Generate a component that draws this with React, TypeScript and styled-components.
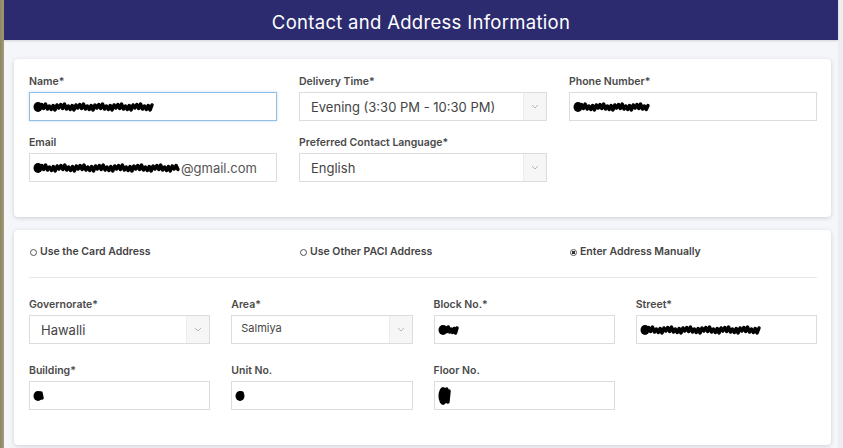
import React from "react";
import styled, { createGlobalStyle } from "styled-components";

const GlobalStyle = createGlobalStyle`
  html, body {
    margin: 0;
    padding: 0;
  }
  body {
    width: 843px;
    height: 448px;
    overflow: hidden;
    background: linear-gradient(90deg, #8c8466 0, #a59c7a 4px, #eceef1 4px);
    font-family: "Inter", "Noto Sans", sans-serif;
  }
`;

type Field = {
  label: string;
  kind: "input" | "select";
  value?: string;
  scribble?: number;
  suffix?: string;
  focused?: boolean;
  small?: boolean;
};

// redacted values in the screenshot: a rough black scrawl
const Scribble = ({ width, tall }: { width: number; tall?: boolean }) => {
  const h = tall ? 20 : 12;
  const steps = Math.max(4, Math.round(width / 2));
  let d = `M3 ${h / 2}`;
  for (let i = 1; i <= steps; i++) {
    const x = 3 + ((width - 6) * i) / steps;
    const jitter = ((i * 37) % 5) / 2;
    const y = i % 2 ? 3 + jitter : h - 3 - jitter;
    d += ` L${x.toFixed(1)} ${y}`;
  }
  return (
    <ScribbleSvg width={width} height={h} viewBox={`0 0 ${width} ${h}`}>
      <path d={d} stroke="#000" strokeWidth={3.5} fill="none" strokeLinejoin="round" strokeLinecap="round" />
      <ellipse cx={5} cy={h / 2} rx={4.5} ry={h / 2 - 1} fill="#000" />
    </ScribbleSvg>
  );
};

const Chevron = () => (
  <svg width="8" height="5" viewBox="0 0 8 5">
    <path d="M1 1 L4 4 L7 1" stroke="#b7b7b7" strokeWidth="1" fill="none" />
  </svg>
);

const FormField = ({ f }: { f: Field }) => (
  <Group>
    <Label>{f.label}</Label>
    {f.kind === "select" ? (
      <SelectBox>
        <SelectValue $small={f.small}>{f.value}</SelectValue>
        <ArrowCell>
          <Chevron />
        </ArrowCell>
      </SelectBox>
    ) : (
      <InputBox $focused={f.focused}>
        {f.scribble ? <Scribble width={f.scribble} tall={f.label === "Floor No."} /> : null}
        {f.suffix && <InputText>{f.suffix}</InputText>}
      </InputBox>
    )}
  </Group>
);

const contactFields: Field[] = [
  { label: "Name*", kind: "input", scribble: 122, focused: true },
  { label: "Delivery Time*", kind: "select", value: "Evening (3:30 PM - 10:30 PM)" },
  { label: "Phone Number*", kind: "input", scribble: 78 },
  { label: "Email", kind: "input", scribble: 148, suffix: "@gmail.com" },
  { label: "Preferred Contact Language*", kind: "select", value: "English" },
];

const addressFields: Field[] = [
  { label: "Governorate*", kind: "select", value: "Hawalli" },
  { label: "Area*", kind: "select", value: "Salmiya", small: true },
  { label: "Block No.*", kind: "input", scribble: 22 },
  { label: "Street*", kind: "input", scribble: 122 },
  { label: "Building*", kind: "input", scribble: 12 },
  { label: "Unit No.", kind: "input", scribble: 10 },
  { label: "Floor No.", kind: "input", scribble: 14 },
];

const options = [
  { label: "Use the Card Address", checked: false },
  { label: "Use Other PACI Address", checked: false },
  { label: "Enter Address Manually", checked: true },
];

export default function App() {
  return (
    <>
      <GlobalStyle />
      <Page>
        <Header>Contact and Address Information</Header>
        <Body>
          <Card>
            <Grid $cols={3} $rowGap={12}>
              {contactFields.map((f) => (
                <FormField key={f.label} f={f} />
              ))}
            </Grid>
          </Card>
          <Card>
            <Grid $cols={3} $rowGap={0}>
              {options.map((o) => (
                <RadioOption key={o.label}>
                  <RadioDot $checked={o.checked} />
                  {o.label}
                </RadioOption>
              ))}
            </Grid>
            <Divider />
            <Grid $cols={4} $rowGap={17}>
              {addressFields.map((f) => (
                <FormField key={f.label} f={f} />
              ))}
            </Grid>
          </Card>
        </Body>
      </Page>
    </>
  );
}

const Page = styled.div`
  margin-left: 4px;
  width: 834px;
  height: 448px;
  background: #f5f6fa;
  display: flex;
  flex-direction: column;
`;

const Header = styled.h1`
  margin: 0;
  height: 40px;
  background: #2c2b6f;
  color: #fff;
  font-size: 18.5px;
  font-weight: 400;
  letter-spacing: 0.3px;
  display: flex;
  align-items: center;
  justify-content: center;
  padding-top: 4px;
  box-sizing: border-box;
  box-shadow: 0 1px 2px rgba(0, 0, 0, 0.15);
`;

const Body = styled.div`
  padding: 19px 7px 0 10px;
  display: flex;
  flex-direction: column;
  gap: 13px;
`;

const Card = styled.section`
  background: #fff;
  border-radius: 4px;
  box-shadow: 0 1px 4px rgba(0, 0, 0, 0.16);
  padding: 13px 14px 35px 15px;
`;

const Grid = styled.div<{ $cols: number; $rowGap: number }>`
  display: grid;
  grid-template-columns: repeat(${(p) => p.$cols}, 1fr);
  column-gap: ${(p) => (p.$cols === 4 ? 21 : 22)}px;
  row-gap: ${(p) => p.$rowGap}px;
`;

const Group = styled.div`
  display: flex;
  flex-direction: column;
`;

const Label = styled.label`
  font-size: 10.5px;
  line-height: 16px;
  font-weight: 600;
  color: #4a4a4a;
  padding-top: 2px;
  margin-bottom: 2px;
`;

const InputBox = styled.div<{ $focused?: boolean }>`
  height: 29px;
  box-sizing: border-box;
  border: 1px solid ${(p) => (p.$focused ? "#8fbfe6" : "#dcdcdc")};
  box-shadow: ${(p) => (p.$focused ? "0 0 3px rgba(100, 160, 220, 0.35)" : "none")};
  background: #fff;
  display: flex;
  align-items: center;
  padding: 0 3px;
`;

const ScribbleSvg = styled.svg`
  flex: none;
`;

const InputText = styled.span`
  font-size: 13px;
  color: #555;
`;

const SelectBox = styled.div`
  height: 29px;
  box-sizing: border-box;
  border: 1px solid #dcdcdc;
  display: flex;
  background: #fff;
`;

const SelectValue = styled.div<{ $small?: boolean }>`
  flex: 1;
  font-size: ${(p) => (p.$small ? "11px" : "13px")};
  color: #444;
  display: flex;
  align-items: ${(p) => (p.$small ? "flex-start" : "center")};
  padding: ${(p) => (p.$small ? "5px 9px 0" : "0 11px")};
`;

const ArrowCell = styled.div`
  width: 22px;
  background: #f6f6f6;
  border-left: 1px solid #ececec;
  display: flex;
  align-items: center;
  justify-content: center;
`;

const RadioOption = styled.div`
  display: flex;
  align-items: center;
  gap: 3px;
  font-size: 10.5px;
  line-height: 16px;
  font-weight: 600;
  color: #444;
  padding: 1px 0 0 1px;
`;

const RadioDot = styled.span<{ $checked: boolean }>`
  width: 7px;
  height: 7px;
  border-radius: 50%;
  border: 1px solid #555;
  box-sizing: border-box;
  background: ${(p) => (p.$checked ? "radial-gradient(circle, #333 0 1.6px, #fff 2px)" : "#fff")};
`;

const Divider = styled.hr`
  border: 0;
  border-top: 1px solid #e8e8e8;
  margin: 17px 0 17px;
`;
